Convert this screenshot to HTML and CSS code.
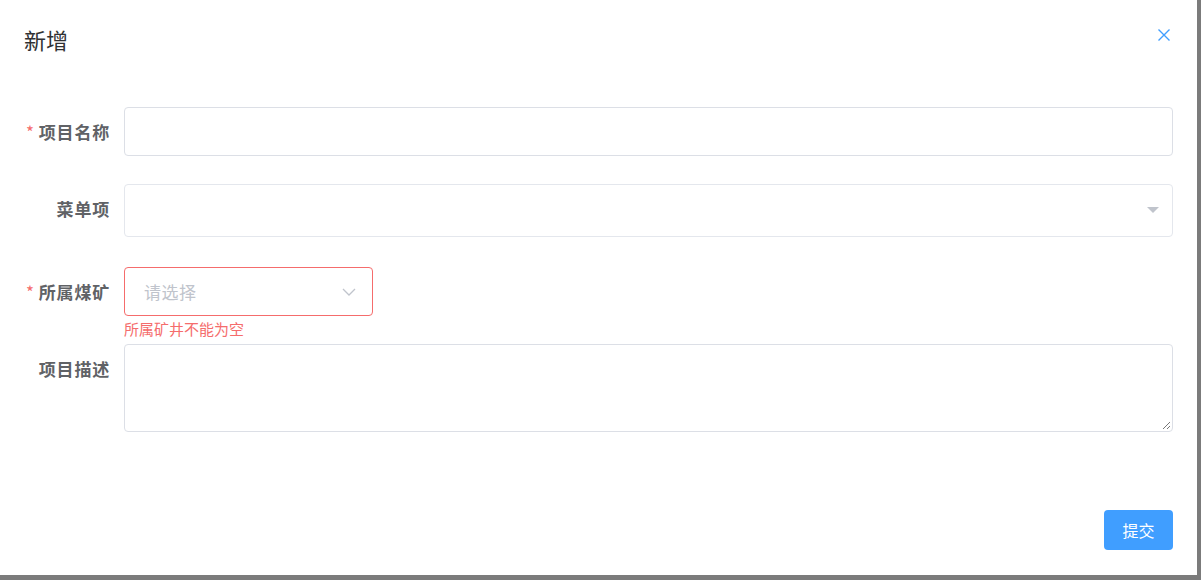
FILE: index.html
```html
<!DOCTYPE html>
<html lang="zh">
<head>
<meta charset="utf-8">
<link rel="stylesheet" href="styles.css">
</head>
<body>
<div class="dialog">
  <div class="header">
    <span class="title">新增</span>
    <button class="close" aria-label="close">
      <svg width="14" height="14" viewBox="0 0 14 14"><path d="M1.5 1.5L12.5 12.5M12.5 1.5L1.5 12.5" stroke="#409eff" stroke-width="1.4" fill="none"/></svg>
    </button>
  </div>
  <div class="form">
    <div class="item">
      <label class="label required">项目名称</label>
      <div class="control"><div class="input h49"></div></div>
    </div>
    <div class="item">
      <label class="label">菜单项</label>
      <div class="control"><div class="input h53 light">
        <svg class="tri" width="12" height="7" viewBox="0 0 12 7"><path d="M0 0H12L6 6Z" fill="#c0c4cc"/></svg>
      </div></div>
    </div>
    <div class="item tight">
      <label class="label required">所属煤矿</label>
      <div class="control">
        <div class="input h49 error small">
          <span class="ph">请选择</span>
          <svg width="14" height="8" viewBox="0 0 14 8"><path d="M1 1L7 7L13 1" stroke="#c0c4cc" stroke-width="1.3" fill="none"/></svg>
        </div>
        <div class="err">所属矿井不能为空</div>
      </div>
    </div>
    <div class="item last">
      <label class="label">项目描述</label>
      <div class="control"><div class="input textarea">
        <svg class="grip" width="10" height="10" viewBox="0 0 10 10"><path d="M9 2L2 9M9 6L6 9" stroke="#777" stroke-width="1" fill="none"/></svg>
      </div></div>
    </div>
  </div>
  <div class="footer">
    <button class="btn">提交</button>
  </div>
</div>
</body>
</html>
```
FILE: styles.css
```css
html, body {
  margin: 0;
  padding: 0;
}
body {
  width: 1201px;
  height: 580px;
  background: #7b7b7b;
  font-family: "Noto Sans CJK SC", "Noto Sans", sans-serif;
  overflow: hidden;
}
.dialog {
  width: 1197px;
  height: 575px;
  background: #fff;
  box-sizing: border-box;
  display: flex;
  flex-direction: column;
}
.header {
  display: flex;
  align-items: center;
  justify-content: space-between;
  padding: 21px 26px 0 24px;
  height: 35px;
}
.title {
  font-size: 22px;
  line-height: 32px;
  color: #303133;
}
.close {
  border: 0;
  background: none;
  padding: 0;
  width: 14px;
  height: 14px;
  margin-top: -8px;
  display: flex;
}
.form {
  padding: 51px 24px 0 0;
}
.item {
  display: flex;
  margin-bottom: 28px;
}
.item:nth-child(2) {
  margin-bottom: 30px;
}
.item.tight, .item.last {
  margin-bottom: 0;
}
.label {
  width: 124px;
  flex: none;
  box-sizing: border-box;
  padding-right: 14px;
  text-align: right;
  font-size: 17px;
  font-weight: bold;
  color: #606266;
  line-height: 49px;
  letter-spacing: 0.8px;
}
.label.required::before {
  content: "*";
  color: #f56c6c;
  margin-right: 4px;
  font-weight: normal;
}
.control {
  flex: 1;
  display: flex;
  flex-direction: column;
}
.input {
  box-sizing: border-box;
  border: 1px solid #dcdfe6;
  border-radius: 4px;
  background: #fff;
  display: flex;
  align-items: center;
  justify-content: flex-end;
  padding: 0 14px 0 19px;
}
.h49 { height: 49px; }
.h53 { height: 53px; }
.light { border-color: #e4e7ed; }
.tri { margin-right: -1px; }
.input.error {
  border-color: #f56c6c;
  width: 249px;
  justify-content: space-between;
  padding-right: 16px;
}
.ph {
  font-size: 17px;
  color: #c0c4cc;
  letter-spacing: 0.5px;
}
.err {
  font-size: 15px;
  color: #f56c6c;
  line-height: 26px;
  padding-bottom: 2px;
}
.textarea {
  height: 88px;
  align-items: flex-end;
  padding: 0 1px 1px 0;
}
.grip {
  display: block;
}
.footer {
  margin-top: auto;
  display: flex;
  justify-content: flex-end;
  padding: 0 24px 25px 0;
}
.btn {
  width: 69px;
  height: 40px;
  border: 0;
  border-radius: 4px;
  background: #409eff;
  color: #fff;
  font-size: 16px;
  font-family: "Noto Sans CJK SC", sans-serif;
  padding: 0;
}
```
